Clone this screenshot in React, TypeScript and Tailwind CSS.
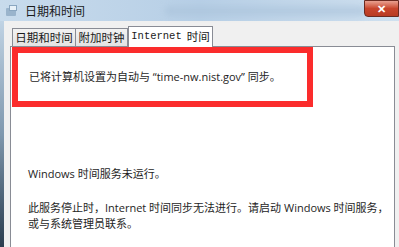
import React from "react";

const cjk = { fontFamily: '"Segoe UI", "Open Sans", "Noto Sans CJK SC", sans-serif' };
const song = { fontFamily: '"Noto Sans CJK SC", sans-serif' };

export default function App() {
  return (
    <div className="w-[399px] h-[247px] overflow-hidden bg-[#f0f0f0] flex flex-col relative" style={cjk}>
      {/* title bar */}
      <div className="h-[21px] shrink-0 flex items-center bg-gradient-to-r from-[#c8dbec] via-[#b7cfe6] to-[#cfe0ef] relative">
        <div className="ml-[5px] w-[13px] h-[13px] relative">
          <div className="absolute left-[1px] top-[4px] w-[10px] h-[8px] bg-[#9ab4cc] rounded-[1px]" />
          <div className="absolute left-[4px] top-[1px] w-[8px] h-[6px] bg-[#e8f1f8] border border-[#8aa6c0]" />
        </div>
        <span className="ml-[7px] text-[12px] text-[#1a1a1a] leading-none" style={song}>日期和时间</span>
        <div className="ml-[80px] w-[200px] h-[10px] rounded bg-[#a9c2da] opacity-60 blur-[3px]" />
        <div className="absolute right-0 top-0 w-[35px] h-[17px] rounded-bl-[4px] bg-gradient-to-b from-[#e8a090] via-[#c8452c] to-[#b83a22] border border-[#6b2a20] flex items-center justify-center text-white text-[11px] font-bold leading-none">
          ✕
        </div>
      </div>
      <div className="flex-1 flex">
        <div className="w-[4px] bg-gradient-to-b from-[#c0d3e4] via-[#7f98ae] to-[#2b3d4f]" />
        <div className="flex-1 flex flex-col pl-[6px] pr-[4px]">
          {/* tabs */}
          <div className="h-[25px] flex items-end pl-[2px] shrink-0">
            <div className="w-[64px] h-[18px] justify-center flex items-center border border-b-0 border-[#898c95] bg-gradient-to-b from-[#f2f2f2] to-[#e3e3e3] text-[11.5px] text-[#1a1a1a]" style={song}>日期和时间</div>
            <div className="w-[52px] h-[18px] justify-center flex items-center border border-b-0 border-l-0 border-[#898c95] bg-gradient-to-b from-[#f2f2f2] to-[#e3e3e3] text-[11.5px] text-[#1a1a1a]" style={song}>附加时钟</div>
            <div className="w-[85px] h-[21px] -mb-[1px] relative z-10 flex items-center justify-center border border-b-0 border-[#898c95] bg-white text-[11.5px] text-[#1a1a1a]">
              <span style={{ fontFamily: '"Liberation Mono", monospace' }} className="text-[10.5px]">Internet</span>
              <span className="ml-[5px]" style={song}>时间</span>
            </div>
          </div>
          {/* panel */}
          <div className="flex-1 bg-white border border-b-0 border-[#898c95] pl-[1px] text-[11px] text-[#1e1e1e]">
            <div className="w-[301px] h-[60px] border-[6px] border-[#fb2c2c] flex items-center pl-[11px]">
              <span className="whitespace-nowrap">已将计算机设置为自动与 “time-nw.nist.gov” 同步。</span>
            </div>
            <div className="pl-[16px] pt-[59px] leading-[16px] whitespace-nowrap">
              <div>Windows 时间服务未运行。</div>
              <div className="mt-[18px]">此服务停止时，Internet 时间同步无法进行。请启动 Windows 时间服务，</div>
              <div>或与系统管理员联系。</div>
            </div>
          </div>
        </div>
      </div>
    </div>
  );
}
